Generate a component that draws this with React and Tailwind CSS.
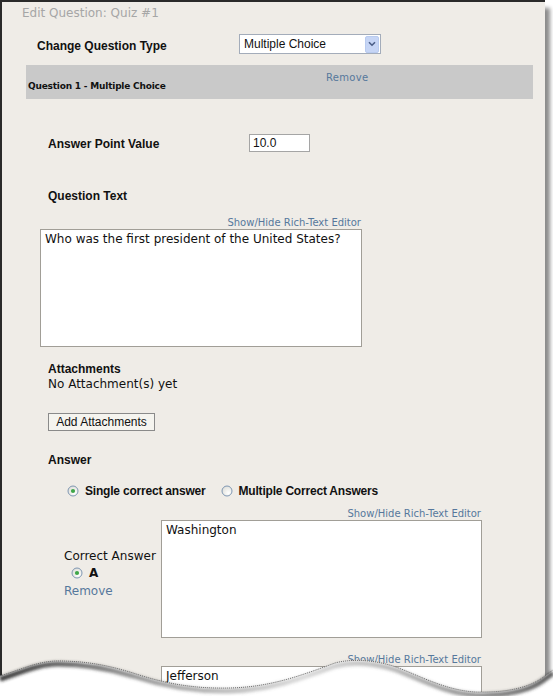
import React from "react";

const verdana = "font-['DejaVu_Sans',Verdana,sans-serif]";
const arial = "font-['Liberation_Sans',Arial,sans-serif]";

function Radio({ checked }) {
    return (
        <svg width="12" height="12" viewBox="0 0 12 12" className="shrink-0">
            <defs>
                <radialGradient id={checked ? "rg-on" : "rg-off"} cx="0.65" cy="0.7" r="0.8">
                    <stop offset="0" stopColor="#ffffff" />
                    <stop offset="1" stopColor="#dcdcd6" />
                </radialGradient>
            </defs>
            <circle cx="6" cy="6" r="5" fill={`url(#${checked ? "rg-on" : "rg-off"})`} stroke="#7f97b3" strokeWidth="1" />
            {checked && <circle cx="6" cy="6" r="2.1" fill="#3fa648" />}
        </svg>
    );
}

function RichText({ width, height, text, className }) {
    return (
        <div className={className} style={{ width }}>
            <div className={`${verdana} h-[12px] pr-[1px] text-right text-[10px] leading-[12px] text-[#56789c]`}>
                Show/Hide Rich-Text Editor
            </div>
            <div
                className={`${verdana} border border-[#a19e97] bg-white pl-[4px] pt-[1px] text-[12px] leading-[16px] text-[#111]`}
                style={{ height }}
            >
                {text}
            </div>
        </div>
    );
}

function TornEdge() {
    const wave =
        "M0,36 C20,30 38,21 58,21 C88,21 110,26 133,33 C160,42 190,49 230,48 C270,47 300,36 335,23 C350,19 372,19 396,27 C420,36 445,50 475,52 C505,53 530,48 545,36 L553,30";
    return (
        <svg
            className="absolute bottom-0 left-0"
            width="553"
            height="56"
            viewBox="0 0 553 56"
        >
            <defs>
                <filter id="blur" x="-5%" y="-50%" width="110%" height="200%">
                    <feGaussianBlur stdDeviation="1.8" />
                </filter>
                <linearGradient id="shade" x1="0" x2="1" y1="0" y2="0">
                    <stop offset="0" stopColor="#222" stopOpacity="0.9" />
                    <stop offset="0.25" stopColor="#444" stopOpacity="0.55" />
                    <stop offset="0.55" stopColor="#666" stopOpacity="0.25" />
                    <stop offset="0.85" stopColor="#444" stopOpacity="0.55" />
                    <stop offset="1" stopColor="#333" stopOpacity="0.8" />
                </linearGradient>
            </defs>
            <path d={`${wave} L553,56 L0,56 Z`} fill="#ffffff" />
            <path d={wave} fill="none" stroke="url(#shade)" strokeWidth="5" filter="url(#blur)" transform="translate(0,3)" />
            <path d={wave} fill="none" stroke="#6a6a6a" strokeWidth="1" strokeDasharray="1 1" />
        </svg>
    );
}

export default function App() {
    return (
        <div className="relative h-[696px] w-[553px] overflow-hidden bg-white">
            <div className="h-[696px] w-[545px] overflow-hidden border-l-2 border-t-2 border-[#2a2a2a] bg-[#efece7] shadow-[5px_8px_4px_rgba(0,0,0,0.45)]">
                {/* title */}
                <div className={`${verdana} flex h-[22px] items-center pl-[20px] text-[12px] text-[#a6a6a6]`}>
                    Edit Question: Quiz #1
                </div>

                {/* question type */}
                <div className="mt-[10px] flex h-[20px] items-center">
                    <div className={`${arial} ml-[35px] mt-[3px] w-[202px] text-[12px] font-bold text-[#111]`}>
                        Change Question Type
                    </div>
                    <div className="flex h-[20px] w-[142px] items-center justify-between border border-[#a3acba] bg-white">
                        <span className={`${arial} pl-[4px] text-[12px] text-[#111]`}>Multiple Choice</span>
                        <span className="mr-[1px] flex h-[17px] w-[14px] items-center justify-center rounded-[2px] border border-[#b9cbef] bg-[#c6d5f5]">
                            <svg width="8" height="6" viewBox="0 0 8 6">
                                <path d="M1 1.2 L4 4.2 L7 1.2" fill="none" stroke="#4a5d86" strokeWidth="1.6" />
                            </svg>
                        </span>
                    </div>
                </div>

                {/* question header bar */}
                <div className="ml-[24px] mt-[11px] h-[34px] w-[507px] bg-[#c9c9c9] pt-[9px]">
                    <div className={`${verdana} h-[8px] pl-[300px] text-[10px] leading-[8px] tracking-[0.3px] text-[#56789c]`}>
                        Remove
                    </div>
                    <div className={`${verdana} h-[8px] pl-[2px] text-[9px] font-bold leading-[8px] tracking-[-0.2px] text-[#111]`}>
                        Question 1 - Multiple Choice
                    </div>
                </div>

                {/* point value */}
                <div className="mt-[35px] flex h-[18px] items-center">
                    <div className={`${arial} ml-[46px] mt-[2px] w-[201px] text-[12px] font-bold text-[#111]`}>
                        Answer Point Value
                    </div>
                    <div className={`${arial} flex h-[18px] w-[61px] items-center border border-[#a5a5a5] bg-white pl-[3px] text-[12px] text-[#111]`}>
                        10.0
                    </div>
                </div>

                <div className={`${arial} ml-[46px] mt-[36px] h-[16px] text-[12px] font-bold leading-[16px] text-[#111]`}>
                    Question Text
                </div>

                <RichText
                    className="ml-[38px] mt-[13px]"
                    width={322}
                    height={118}
                    text="Who was the first president of the United States?"
                />

                {/* attachments */}
                <div className="ml-[46px] mt-[15px]">
                    <div className={`${arial} text-[12px] font-bold leading-[15px] text-[#111]`}>Attachments</div>
                    <div className={`${verdana} text-[12px] leading-[15px] text-[#111]`}>No Attachment(s) yet</div>
                </div>

                <button className={`${arial} ml-[46px] mt-[21px] flex h-[18px] w-[107px] items-center justify-center border border-[#8a8a8a] bg-[#f5f4ef] text-[12px] text-[#111]`}>
                    Add Attachments
                </button>

                <div className={`${arial} ml-[46px] mt-[21px] h-[16px] text-[12px] font-bold leading-[16px] text-[#111]`}>
                    Answer
                </div>

                {/* answer type */}
                <div className={`${arial} ml-[65px] mt-[15px] flex h-[16px] items-center text-[12px] font-bold tracking-[-0.2px] text-[#111]`}>
                    <Radio checked />
                    <span className="ml-[6px]">Single correct answer</span>
                    <span className="ml-[15px]">
                        <Radio />
                    </span>
                    <span className="ml-[6px]">Multiple Correct Answers</span>
                </div>

                {/* answer A */}
                <div className="mt-[9px] flex">
                    <div className="ml-[62px] w-[97px] pt-[40px]">
                        <div className={`${verdana} text-[12px] leading-[16px] text-[#111]`}>Correct Answer</div>
                        <div className="flex h-[18px] items-center pl-[7px]">
                            <Radio checked />
                            <span className={`${verdana} ml-[6px] text-[12px] font-bold text-[#111]`}>A</span>
                        </div>
                        <div className={`${verdana} text-[12px] leading-[18px] text-[#56789c]`}>Remove</div>
                    </div>
                    <RichText width={321} height={118} text="Washington" />
                </div>

                {/* answer B */}
                <RichText className="ml-[159px] mt-[16px]" width={321} height={80} text="Jefferson" />
            </div>
            <TornEdge />
        </div>
    );
}
